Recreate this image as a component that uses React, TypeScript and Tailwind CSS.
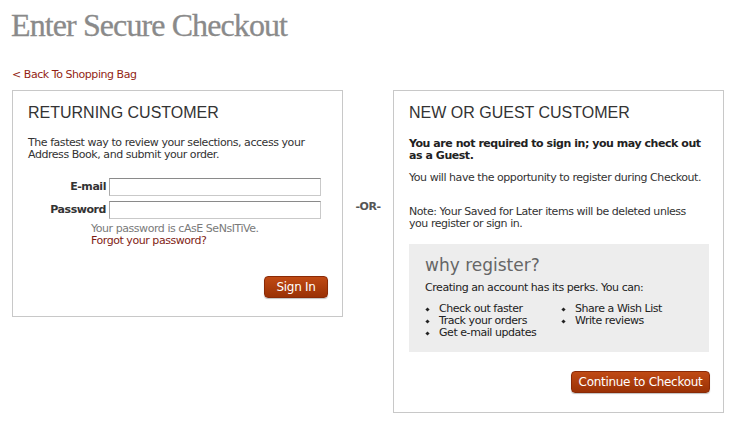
import React from "react";

function Bullet({ children }: { children: React.ReactNode }) {
  return (
    <li className="flex items-center leading-[12px]">
      <span className="w-[14px] flex items-center">
        <span className="block w-[3px] h-[3px] bg-[#222] rotate-45 ml-[1px]" />
      </span>
      <span>{children}</span>
    </li>
  );
}

export default function App() {
  return (
    <div className="w-[734px] h-[422px] bg-white pl-[11px] pt-[9px] font-['DejaVu_Sans',Verdana,sans-serif] text-[11px] tracking-[-0.45px] text-[#333] overflow-hidden">
      <h1 className="font-['Liberation_Serif',serif] text-[32px] leading-[32px] text-[#8a8a8a] tracking-[-0.9px] whitespace-nowrap [-webkit-text-stroke:0.3px_#8a8a8a]">
        Enter Secure Checkout
      </h1>
      <a className="block mt-[28px] ml-[1px] leading-[12px] text-[#931f14] w-max">
        &lt; Back To Shopping Bag
      </a>
      <div className="flex items-start mt-[9px] ml-[1px]">
        {/* Returning customer */}
        <div className="w-[331px] h-[227px] border border-[#c8c8c8] flex flex-col">
          <h2 className="pl-[15px] pt-[12px] font-['Liberation_Sans',Arial,sans-serif] text-[16px] leading-[20px] tracking-normal text-[#333]">
            RETURNING CUSTOMER
          </h2>
          <p className="ml-[15px] mt-[14px] w-[292px] leading-[12px]">
            The fastest way to review your selections, access your Address Book, and submit your order.
          </p>
          <div className="mt-[17px] flex flex-col gap-[5px]">
            <div className="flex items-center gap-[3px]">
              <label className="w-[93px] text-right font-bold leading-[12px] text-[#333]">E-mail</label>
              <input className="w-[212px] h-[18px] border border-[#c9c9c9] border-t-[#8a8a8a] border-l-[#a9a9a9] bg-white outline-none" />
            </div>
            <div className="flex items-center gap-[3px]">
              <label className="w-[93px] text-right font-bold leading-[12px] text-[#333]">Password</label>
              <input
                type="password"
                className="w-[212px] h-[18px] border border-[#c9c9c9] border-t-[#8a8a8a] border-l-[#a9a9a9] bg-white outline-none"
              />
            </div>
          </div>
          <div className="ml-[78px] mt-[4px] leading-[12px]">
            <div className="text-[#7a7a7a]">Your password is cAsE SeNsITiVe.</div>
            <a className="block text-[#7f1d14] w-max">Forgot your password?</a>
          </div>
          <div className="flex justify-end mr-[14px] mt-[29px]">
            <button className="h-[22px] w-[64px] rounded-[4px] border border-[#8a2a06] bg-gradient-to-b from-[#c04a14] to-[#9a3105] text-white text-[12px] leading-[12px] tracking-[-0.3px] shadow-[0_1px_1px_rgba(0,0,0,0.25)]">
              Sign In
            </button>
          </div>
        </div>

        {/* OR */}
        <div className="w-[50px] flex justify-center mt-[111px] font-bold text-[#555] leading-[12px]">
          -OR-
        </div>

        {/* Guest customer */}
        <div className="w-[331px] h-[323px] border border-[#c8c8c8] flex flex-col">
          <h2 className="pl-[15px] pt-[12px] font-['Liberation_Sans',Arial,sans-serif] text-[16px] leading-[20px] tracking-normal text-[#333]">
            NEW OR GUEST CUSTOMER
          </h2>
          <p className="ml-[15px] mt-[15px] w-[300px] font-bold leading-[12px] text-[#222]">
            You are not required to sign in; you may check out as a Guest.
          </p>
          <p className="ml-[15px] mt-[10px] leading-[12px]">
            You will have the opportunity to register during Checkout.
          </p>
          <p className="ml-[15px] mt-[22px] w-[285px] leading-[12px]">
            Note: Your Saved for Later items will be deleted unless you register or sign in.
          </p>
          <div className="ml-[15px] mt-[14px] w-[300px] h-[108px] bg-[#ededed] pl-[16px] pt-[11px]">
            <div className="text-[17px] leading-[20px] tracking-normal text-[#666]">why register?</div>
            <div className="mt-[7px] leading-[12px] text-[#222]">Creating an account has its perks. You can:</div>
            <div className="mt-[9px] grid grid-cols-[136px_1fr] text-[#222]">
              <ul>
                <Bullet>Check out faster</Bullet>
                <Bullet>Track your orders</Bullet>
                <Bullet>Get e-mail updates</Bullet>
              </ul>
              <ul>
                <Bullet>Share a Wish List</Bullet>
                <Bullet>Write reviews</Bullet>
              </ul>
            </div>
          </div>
          <div className="flex justify-end mr-[13px] mt-[19px]">
            <button className="h-[22px] w-[139px] rounded-[4px] border border-[#8a2a06] bg-gradient-to-b from-[#c04a14] to-[#9a3105] text-white text-[12px] leading-[12px] tracking-[-0.3px] shadow-[0_1px_1px_rgba(0,0,0,0.25)]">
              Continue to Checkout
            </button>
          </div>
        </div>
      </div>
    </div>
  );
}
